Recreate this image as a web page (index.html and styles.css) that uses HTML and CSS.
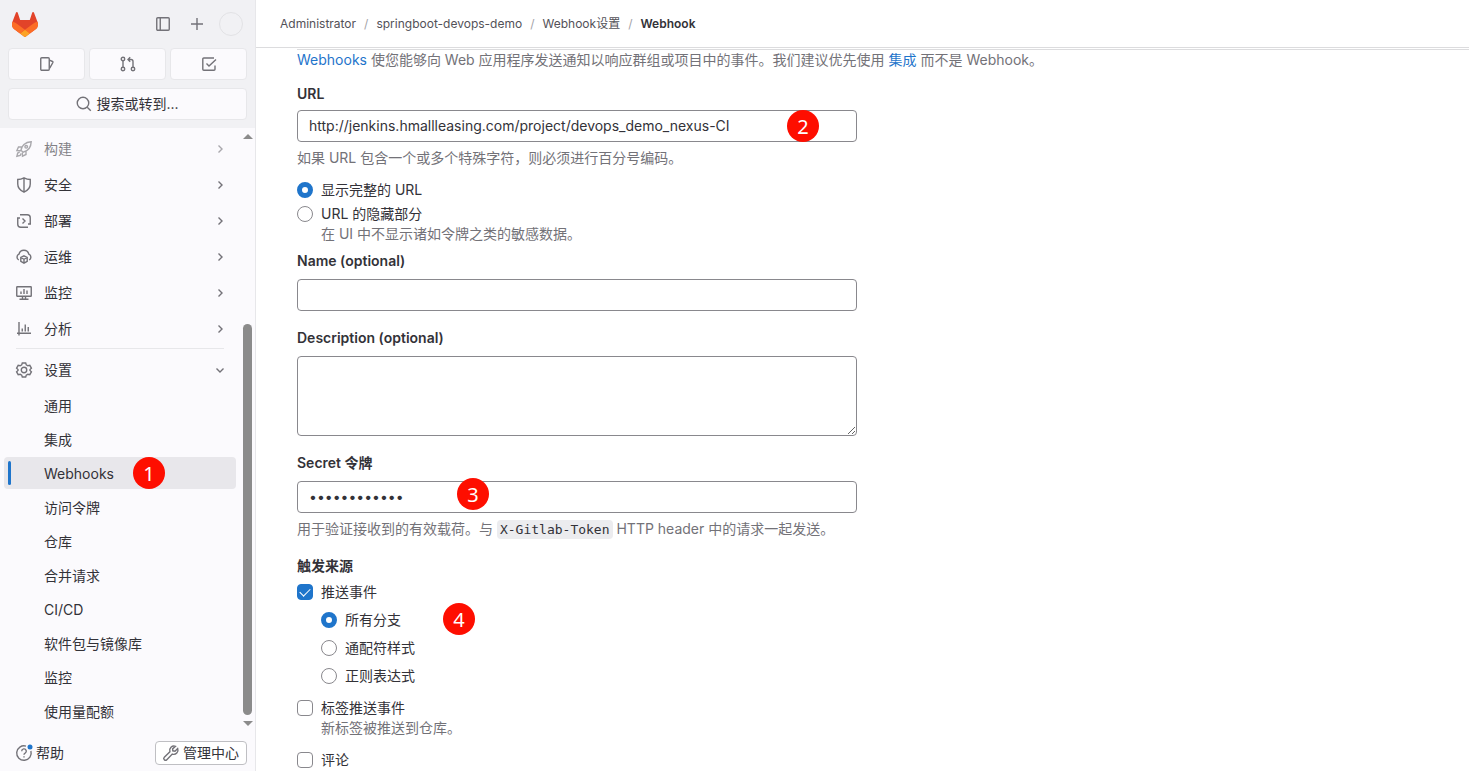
FILE: index.html
```html
<!DOCTYPE html>
<html lang="zh-CN">
<head>
    <meta charset="UTF-8">
    <meta name="viewport" content="width=device-width, initial-scale=1.0">
    <title>Webhook · Webhook设置 · springboot-devops-demo · GitLab</title>
    <link rel="stylesheet" href="styles.css">
</head>
<body>
    <aside class="sidebar">
        <div class="sidebar-top">
            <div class="brand-row">
                <a href="#" class="logo" aria-label="GitLab">
                    <svg width="26" height="25" viewBox="0 0 25 24">
                        <path fill="#e24329" d="m24.507 9.5-.034-.09L21.082.562a.896.896 0 0 0-1.694.091l-2.29 7.01H7.825L5.535.653a.898.898 0 0 0-1.694-.09L.451 9.411.416 9.5a6.297 6.297 0 0 0 2.09 7.278l.012.01.03.022 5.16 3.867 2.56 1.935 1.554 1.176a1.051 1.051 0 0 0 1.268 0l1.555-1.176 2.56-1.935 5.197-3.89.014-.01A6.297 6.297 0 0 0 24.507 9.5Z"/>
                        <path fill="#fc6d26" d="m24.507 9.5-.034-.09a11.44 11.44 0 0 0-4.56 2.051l-7.447 5.632 4.742 3.584 5.197-3.89.014-.01A6.297 6.297 0 0 0 24.507 9.5Z"/>
                        <path fill="#fca326" d="m7.707 20.677 2.56 1.935 1.555 1.176a1.051 1.051 0 0 0 1.268 0l1.555-1.176 2.56-1.935-4.743-3.584-4.755 3.584Z"/>
                        <path fill="#fc6d26" d="M5.01 11.461a11.43 11.43 0 0 0-4.56-2.05L.416 9.5a6.297 6.297 0 0 0 2.09 7.278l.012.01.03.022 5.16 3.867 4.745-3.584-7.444-5.632Z"/>
                    </svg>
                </a>
                <button type="button" class="icon-btn" aria-label="侧边栏">
                    <svg class="icon" viewBox="0 0 16 16"><rect x="1.75" y="1.75" width="12.5" height="12.5" rx="1"/><path d="M5.25 2v12"/></svg>
                </button>
                <button type="button" class="icon-btn" aria-label="新建">
                    <svg class="icon" viewBox="0 0 16 16"><path d="M8 2v12M2 8h12"/></svg>
                </button>
                <button type="button" class="avatar" aria-label="用户"></button>
            </div>
            <div class="shortcuts">
                <button type="button" class="tile" aria-label="议题">
                    <svg class="icon" viewBox="0 0 16 16"><rect x="1.75" y="1.75" width="8.5" height="12.5" rx="1"/><path d="M10.5 4.2l3 1.3a.8.8 0 0 1 .4 1l-3.2 5.6"/></svg>
                </button>
                <button type="button" class="tile" aria-label="合并请求">
                    <svg class="icon" viewBox="0 0 16 16"><circle cx="3" cy="3" r="1.75"/><circle cx="3" cy="13" r="1.75"/><circle cx="13" cy="13" r="1.75"/><path d="M3 5v6M13 11V5.5a2 2 0 0 0-2-2H8M10.2 1.2 8 3.5l2.2 2.3"/></svg>
                </button>
                <button type="button" class="tile" aria-label="待办事项">
                    <svg class="icon" viewBox="0 0 16 16"><path d="M13 2H2.8a1 1 0 0 0-1 1v10.2a1 1 0 0 0 1 1H13a1 1 0 0 0 1-1V9.5M5.5 7.5 8 10l7-6.5"/></svg>
                </button>
            </div>
            <button type="button" class="tile search">
                <svg class="icon" viewBox="0 0 16 16"><circle cx="7" cy="7" r="5.75"/><path d="m11.2 11.2 3.6 3.6"/></svg>
                搜索或转到...
            </button>
        </div>

        <div class="sidebar-body">
            <nav class="nav">
                <a href="#" class="nav-item faded">
                    <svg class="icon" viewBox="0 0 16 16"><path d="M5 9.2C5.5 5 9 1 15.2.8 15 7 11.5 10.3 7 11.2ZM5.6 6H2.5L.9 9.5l4 .2M10 10.5v3l-3.5 1.7-.2-3.6M3.7 11.2l-2 .8-.8 3.2 3.3-.8.8-2"/><circle cx="10.2" cy="5.8" r="1.3"/></svg>
                    <span>构建</span>
                    <svg class="chevron" viewBox="0 0 8 8"><path d="M2.5.5 6 4 2.5 7.5"/></svg>
                </a>
                <a href="#" class="nav-item">
                    <svg class="icon" viewBox="0 0 16 16"><path d="M1.75 2.5C4 2.4 6 1.8 8 .8c2 1 4 1.6 6.25 1.7V7c0 4-2.5 6.5-6.25 8.2C4.25 13.5 1.75 11 1.75 7ZM8 1v14"/></svg>
                    <span>安全</span>
                    <svg class="chevron" viewBox="0 0 8 8"><path d="M2.5.5 6 4 2.5 7.5"/></svg>
                </a>
                <a href="#" class="nav-item">
                    <svg class="icon" viewBox="0 0 16 16"><path d="M4 1.75h7.25a3 3 0 0 1 3 3V11M12 14.25H4.75a3 3 0 0 1-3-3V5M1 5h3M15 11h-3M6.5 5.5 9 8l-2.5 2.5"/></svg>
                    <span>部署</span>
                    <svg class="chevron" viewBox="0 0 8 8"><path d="M2.5.5 6 4 2.5 7.5"/></svg>
                </a>
                <a href="#" class="nav-item">
                    <svg class="icon" viewBox="0 0 16 16"><path d="M2.8 11A3.2 3.2 0 0 1 3 5.2a5 5 0 0 1 9.8 0 3.2 3.2 0 0 1 .4 5.8M8 6.8l3.2 1.7v3.8L8 14.2l-3.2-1.9V8.5ZM4.8 8.5 8 10.3l3.2-1.8M8 10.3v3.9"/></svg>
                    <span>运维</span>
                    <svg class="chevron" viewBox="0 0 8 8"><path d="M2.5.5 6 4 2.5 7.5"/></svg>
                </a>
                <a href="#" class="nav-item">
                    <svg class="icon" viewBox="0 0 16 16"><rect x=".75" y="1.75" width="14.5" height="9.5" rx=".5"/><path d="M5 6.5V9M8 4v5M11 5.5V9M6.5 11.5V14M9.5 11.5V14M3.5 14.25h9"/></svg>
                    <span>监控</span>
                    <svg class="chevron" viewBox="0 0 8 8"><path d="M2.5.5 6 4 2.5 7.5"/></svg>
                </a>
                <a href="#" class="nav-item">
                    <svg class="icon" viewBox="0 0 16 16"><path d="M3 1v13.5M1 12.25h14M6.25 7.5v3M9.25 3.5v7M12.25 6v4.5"/></svg>
                    <span>分析</span>
                    <svg class="chevron" viewBox="0 0 8 8"><path d="M2.5.5 6 4 2.5 7.5"/></svg>
                </a>
                <hr class="nav-divider">
                <a href="#" class="nav-item">
                    <svg class="icon" viewBox="0 0 16 16"><path d="M6.3 1h3.4l.6 1.9 1.5.9 2-.4 1.6 2.8L14 7.5v1l1.4 1.3-1.6 2.8-2-.4-1.5.9-.6 1.9H6.3l-.6-1.9-1.5-.9-2 .4L.6 9.8 2 8.5v-1L.6 6.2l1.6-2.8 2 .4 1.5-.9Z"/><circle cx="8" cy="8" r="2.75"/></svg>
                    <span>设置</span>
                    <svg class="chevron" viewBox="0 0 8 8"><path d="M.5 2.5 4 6l3.5-3.5"/></svg>
                </a>
                <div class="subnav">
                    <a href="#" class="subnav-item">通用</a>
                    <a href="#" class="subnav-item">集成</a>
                    <a href="#" class="subnav-item active">Webhooks<span class="marker marker-1">1</span></a>
                    <a href="#" class="subnav-item">访问令牌</a>
                    <a href="#" class="subnav-item">仓库</a>
                    <a href="#" class="subnav-item">合并请求</a>
                    <a href="#" class="subnav-item">CI/CD</a>
                    <a href="#" class="subnav-item">软件包与镜像库</a>
                    <a href="#" class="subnav-item">监控</a>
                    <a href="#" class="subnav-item">使用量配额</a>
                </div>
            </nav>
            <div class="scrollbar">
                <span class="arrow-up"></span>
                <span class="thumb"></span>
                <span class="arrow-down"></span>
            </div>
        </div>

        <div class="sidebar-footer">
            <button type="button" class="help-btn">
                <svg class="icon" viewBox="0 0 16 16"><path d="M10 1.1A7.25 7.25 0 1 0 14.9 6M5.7 6.2a2.3 2.3 0 1 1 3.4 2c-.8.4-1.1.8-1.1 1.6M8 11.2v1.3"/><circle class="dot" cx="14" cy="2" r="2.5"/></svg>
                帮助
            </button>
            <a href="#" class="admin-btn">
                <svg class="icon" viewBox="0 0 16 16"><path d="M12.5 1.3a4.3 4.3 0 0 0-5.6 5.4l-5.6 5.5a1.7 1.7 0 0 0 2.5 2.5l5.5-5.6a4.3 4.3 0 0 0 5.4-5.6L12 6.2l-2.2-.4-.2-1.9Z"/></svg>
                管理中心
            </a>
        </div>
    </aside>

    <div class="page">
        <header class="topbar">
            <nav class="breadcrumbs">
                <a href="#">Administrator</a>
                <span class="sep">/</span>
                <a href="#">springboot-devops-demo</a>
                <span class="sep">/</span>
                <a href="#">Webhook设置</a>
                <span class="sep">/</span>
                <a href="#" class="current">Webhook</a>
            </nav>
        </header>

        <main class="content">
            <p class="intro"><a href="#">Webhooks</a> 使您能够向 Web 应用程序发送通知以响应群组或项目中的事件。我们建议优先使用 <a href="#">集成</a> 而不是 Webhook。</p>

            <form class="hook-form">
                <div class="field">
                    <label for="url" class="field-label url-label">URL</label>
                    <div class="input-wrap">
                        <input id="url" class="text-input" type="text" value="http://jenkins.hmallleasing.com/project/devops_demo_nexus-CI">
                        <span class="marker marker-2">2</span>
                    </div>
                    <p class="hint">如果 URL 包含一个或多个特殊字符，则必须进行百分号编码。</p>
                </div>

                <div class="url-options">
                    <label class="choice"><input type="radio" name="mask" checked>显示完整的 URL</label>
                    <label class="choice"><input type="radio" name="mask">URL 的隐藏部分</label>
                    <p class="choice-hint">在 UI 中不显示诸如令牌之类的敏感数据。</p>
                </div>

                <div class="field name-field">
                    <label for="name" class="field-label">Name (optional)</label>
                    <input id="name" class="text-input" type="text">
                </div>

                <div class="field">
                    <label for="description" class="field-label">Description (optional)</label>
                    <textarea id="description" class="text-input"></textarea>
                </div>

                <div class="field">
                    <label for="token" class="field-label">Secret 令牌</label>
                    <div class="input-wrap">
                        <input id="token" class="text-input" type="password" value="************">
                        <span class="marker marker-3">3</span>
                    </div>
                    <p class="hint">用于验证接收到的有效载荷。与 <code>X-Gitlab-Token</code> HTTP header 中的请求一起发送。</p>
                </div>

                <fieldset class="triggers">
                    <legend>触发来源</legend>
                    <label class="choice"><input type="checkbox" checked>推送事件</label>
                    <div class="branches">
                        <label class="choice"><input type="radio" name="branch" checked>所有分支</label>
                        <label class="choice"><input type="radio" name="branch">通配符样式</label>
                        <label class="choice"><input type="radio" name="branch">正则表达式</label>
                        <span class="marker marker-4">4</span>
                    </div>
                    <div class="trigger">
                        <label class="choice"><input type="checkbox">标签推送事件</label>
                        <p class="choice-hint">新标签被推送到仓库。</p>
                    </div>
                    <div class="trigger">
                        <label class="choice"><input type="checkbox">评论</label>
                    </div>
                </fieldset>
            </form>
        </main>
    </div>
</body>
</html>
```

FILE: styles.css
```css
* {
    box-sizing: border-box;
}

body {
    display: flex;
    height: 100vh;
    margin: 0;
    overflow: hidden;
    font-family: Inter, "Noto Sans CJK SC", sans-serif;
    font-size: 14px;
    line-height: 20px;
    color: #333238;
    background-color: #fff;
}

a {
    color: #1f75cb;
    text-decoration: none;
}

p {
    margin: 0;
}

button {
    font: inherit;
    color: inherit;
    padding: 0;
    border: 0;
    background: none;
}

.icon {
    width: 16px;
    height: 16px;
    flex: none;
    fill: none;
    stroke: #737278;
    stroke-width: 1.4;
    overflow: visible;
}

/* Sidebar */
.sidebar {
    display: flex;
    flex-direction: column;
    flex: none;
    width: 256px;
    border-right: 1px solid #e7e7ea;
    background-color: #fbfafd;
}

.sidebar-top {
    padding: 0 8px 8px;
    background-color: #f1f1f4;
}

.brand-row {
    display: flex;
    align-items: center;
    gap: 10px;
    height: 48px;
    padding: 0 4px;
}

.logo {
    display: flex;
    margin-right: auto;
}

.icon-btn {
    display: flex;
    align-items: center;
    justify-content: center;
    width: 24px;
    height: 24px;
}

.avatar {
    width: 24px;
    height: 24px;
    border: 1px solid #e2e2e5;
    border-radius: 50%;
}

.shortcuts {
    display: grid;
    grid-template-columns: repeat(3, 1fr);
    gap: 4px;
    margin-bottom: 8px;
}

.tile {
    display: flex;
    align-items: center;
    justify-content: center;
    gap: 4px;
    height: 32px;
    border: 1px solid #e7e7ea;
    border-radius: 4px;
    background-color: #fbfafd;
}

.search {
    width: 100%;
}

.sidebar-body {
    display: flex;
    flex: 1;
    min-height: 0;
}

.nav {
    flex: 1;
    padding: 3px 4px 0;
    overflow: hidden;
}

.nav-item {
    display: flex;
    align-items: center;
    gap: 12px;
    height: 36px;
    padding: 0 12px;
    color: #333238;
}

.nav-item.faded {
    opacity: 0.6;
}

.chevron {
    width: 8px;
    height: 8px;
    margin-left: auto;
    fill: none;
    stroke: #737278;
    stroke-width: 1.4;
}

.nav-divider {
    height: 1px;
    margin: 1px 12px 3px;
    border: 0;
    background-color: #e7e7ea;
}

.subnav {
    display: grid;
    gap: 2px;
    padding-top: 1px;
}

.subnav-item {
    position: relative;
    height: 32px;
    padding: 7px 12px 5px 40px;
    border-radius: 4px;
    color: #333238;
}

.subnav-item.active {
    background-color: #e8e7eb;
}

.subnav-item.active::before {
    content: "";
    position: absolute;
    top: 4px;
    bottom: 4px;
    left: 4px;
    width: 3px;
    border-radius: 2px;
    background-color: #1f75cb;
}

.scrollbar {
    display: flex;
    flex-direction: column;
    align-items: center;
    width: 15px;
    padding: 6px 0 9px;
}

.arrow-up,
.arrow-down {
    border: 5px solid transparent;
}

.arrow-up {
    border-top-width: 0;
    border-bottom-color: #8b8b8b;
}

.arrow-down {
    margin-top: 6px;
    border-bottom-width: 0;
    border-top-color: #8b8b8b;
}

.thumb {
    width: 9px;
    height: 66%;
    margin-top: auto;
    border-radius: 5px;
    background-color: #8b8b8b;
}

.sidebar-footer {
    display: flex;
    align-items: center;
    justify-content: space-between;
    height: 36px;
    padding: 0 8px 0 16px;
}

.help-btn,
.admin-btn {
    display: flex;
    align-items: center;
    gap: 4px;
    color: #333238;
}

.help-btn .dot {
    fill: #1f75cb;
    stroke: none;
}

.admin-btn {
    height: 24px;
    padding: 0 7px;
    border: 1px solid #bfbfc3;
    border-radius: 4px;
    background-color: #fff;
}

/* Page */
.page {
    flex: 1;
    min-width: 0;
}

.topbar {
    display: flex;
    align-items: center;
    height: 48px;
    padding: 0 24px;
    border-bottom: 1px solid #dcdcde;
}

.breadcrumbs {
    display: flex;
    gap: 8px;
    font-size: 12px;
}

.breadcrumbs a {
    color: #535158;
}

.breadcrumbs .sep {
    color: #a4a3a8;
}

.breadcrumbs .current {
    font-weight: 600;
    color: #333238;
}

.content {
    margin-top: 1px;
    padding-left: 41px;
}

.intro {
    border-top: 1px solid #dcdcde;
    color: #737278;
}

.hook-form {
    max-width: 560px;
    padding-top: 14px;
}

.field {
    margin-bottom: 17px;
}

.field-label {
    display: block;
    margin-bottom: 8px;
    font-weight: 600;
}

.url-label {
    margin-bottom: 6px;
}

.input-wrap {
    position: relative;
}

.text-input {
    display: block;
    width: 100%;
    height: 32px;
    padding: 5px 11px 7px;
    border: 1px solid #89888d;
    border-radius: 4px;
    font: inherit;
    color: #333238;
    background-color: #fff;
}

textarea.text-input {
    height: 80px;
    resize: vertical;
}

.hint {
    padding-top: 6px;
    color: #737278;
}

.hint code {
    padding: 2px 3px;
    border-radius: 4px;
    font-family: "DejaVu Sans Mono", monospace;
    font-size: 13px;
    line-height: 16px;
    color: #333238;
    background-color: #ececef;
}

.url-options {
    display: grid;
    margin-top: -5px;
}

.choice {
    display: flex;
    align-items: center;
    gap: 8px;
}

.choice input {
    appearance: none;
    flex: none;
    width: 16px;
    height: 16px;
    margin: 0;
    border: 1px solid #89888d;
    background-color: #fff;
}

.choice input[type="radio"] {
    border-radius: 50%;
}

.choice input[type="checkbox"] {
    display: grid;
    place-items: center;
    border-radius: 4px;
}

.choice input[type="radio"]:checked {
    border: 5px solid #1f75cb;
}

.choice input[type="checkbox"]:checked {
    border-color: #1f75cb;
    background-color: #1f75cb;
}

.choice input[type="checkbox"]:checked::before {
    content: "";
    width: 9px;
    height: 5px;
    margin-bottom: 3px;
    border: solid #fff;
    border-width: 0 0 1px 1px;
    transform: rotate(-45deg);
}

.choice + .choice {
    margin-top: 4px;
}

.choice-hint {
    padding-left: 24px;
    color: #737278;
}

.name-field {
    margin-top: 7px;
}

.triggers {
    margin: 0;
    padding: 0;
    border: 0;
}

.triggers legend {
    margin-bottom: 6px;
    padding: 0;
    font-weight: 600;
}

.branches {
    position: relative;
    display: grid;
    gap: 8px;
    padding: 8px 0 0 24px;
}

.branches .choice {
    margin-top: 0;
}

.trigger {
    margin-top: 12px;
}

/* Numbered step markers */
.marker {
    position: absolute;
    width: 32px;
    height: 32px;
    border-radius: 50%;
    font-family: "Noto Sans", sans-serif;
    font-size: 20px;
    line-height: 34px;
    text-align: center;
    color: #fff;
    background-color: #fe0e00;
}

.marker-1 {
    top: 0;
    left: 129px;
}

.marker-2 {
    top: 0;
    left: 490px;
}

.marker-3 {
    top: -3px;
    left: 160px;
}

.marker-4 {
    top: 1px;
    left: 146px;
}
```
